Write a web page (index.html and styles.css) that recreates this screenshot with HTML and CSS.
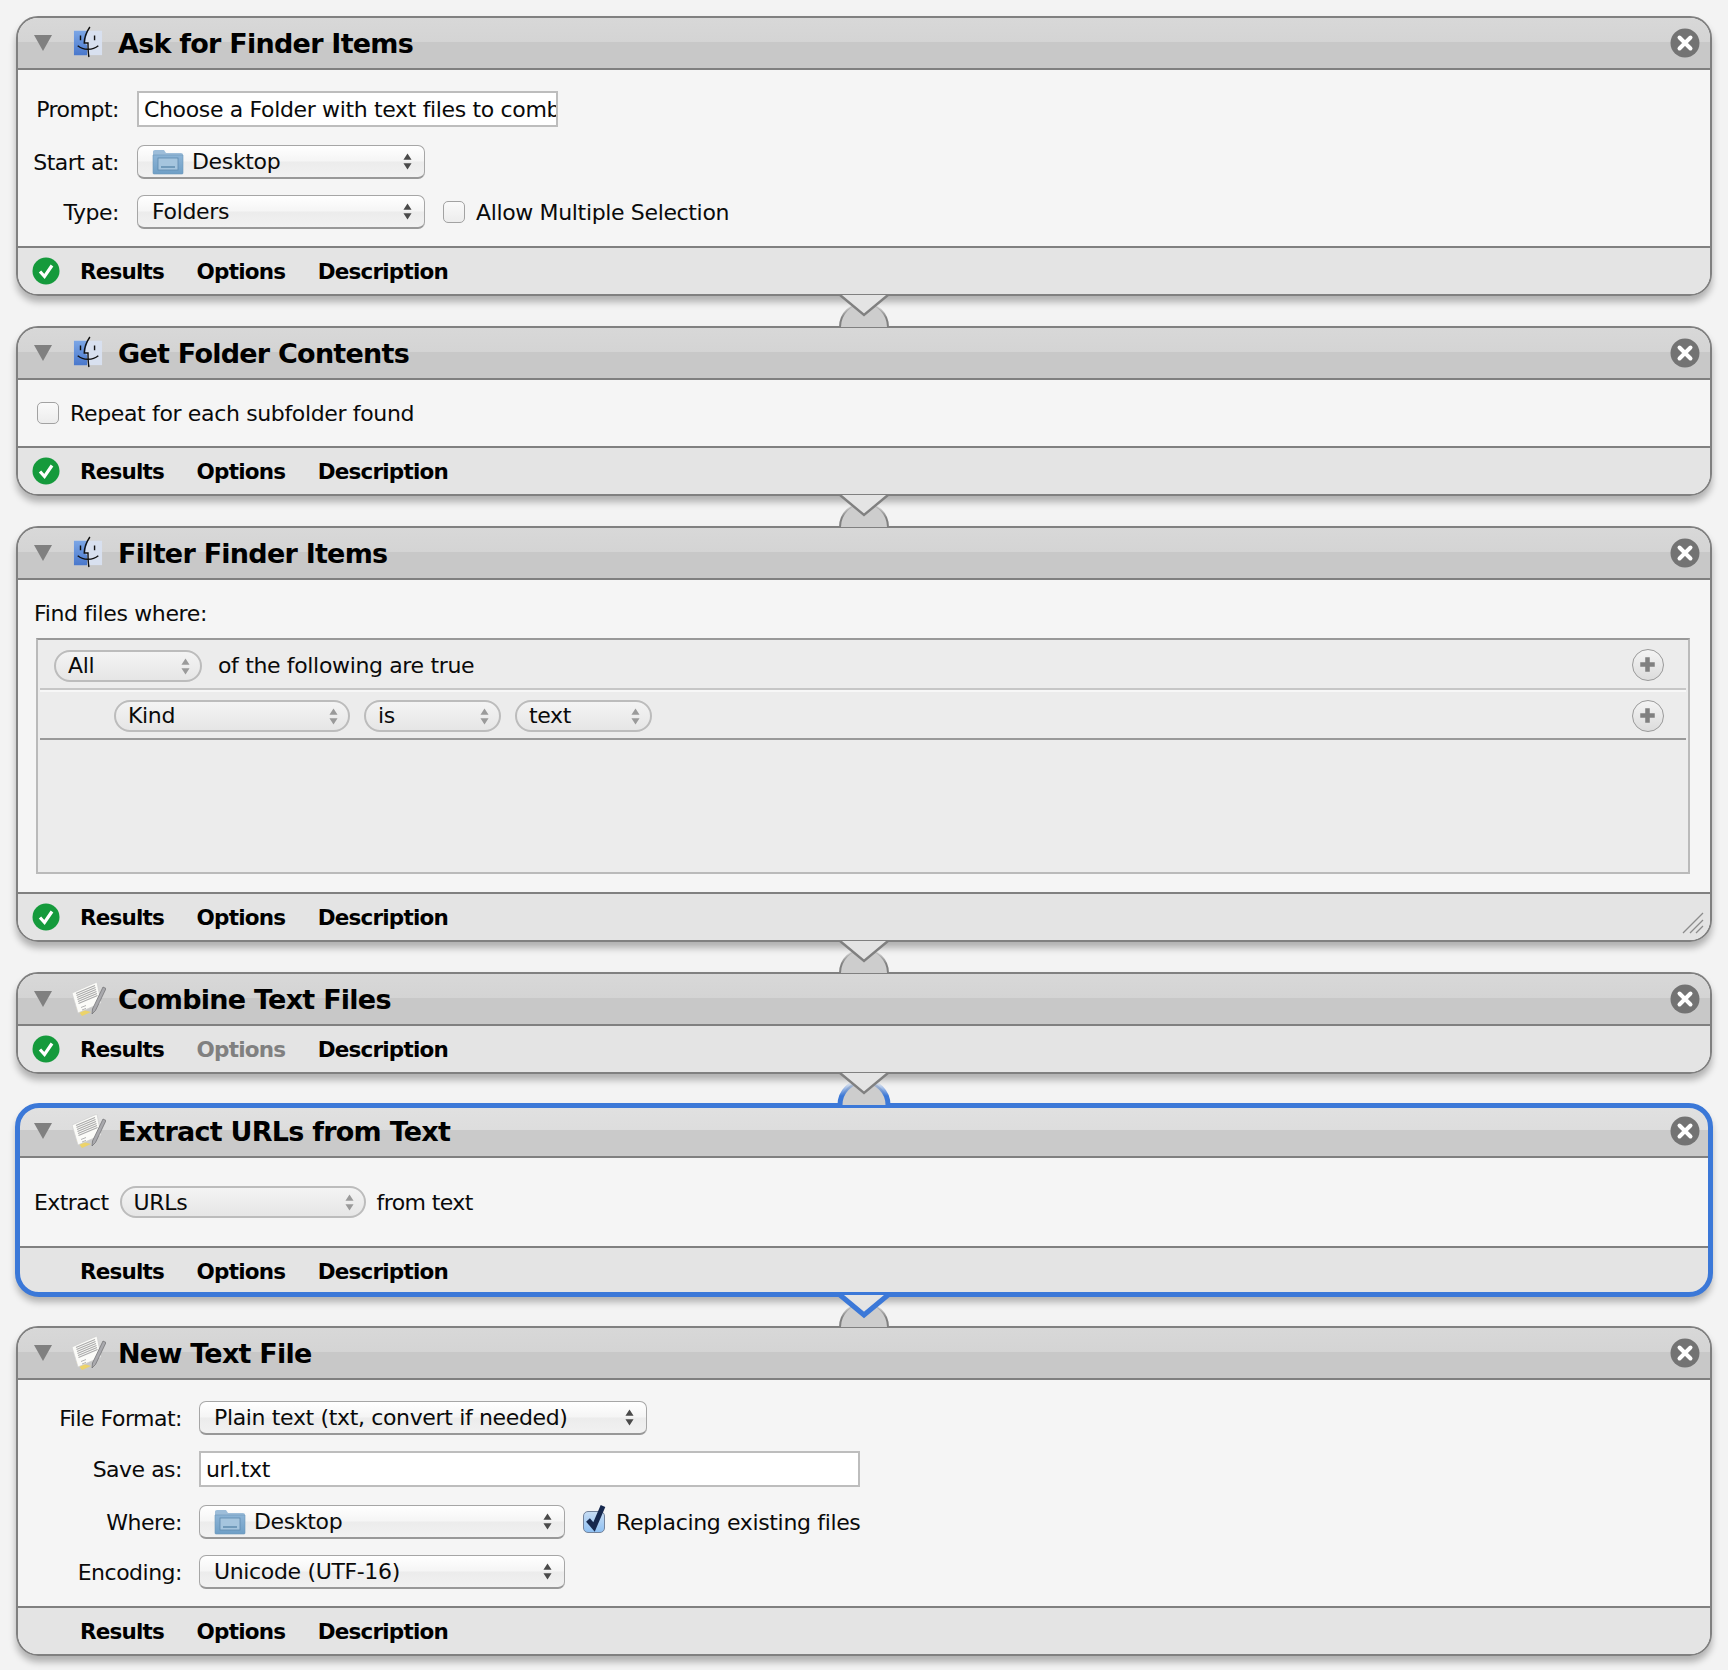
FILE: index.html
```html
<!DOCTYPE html>
<html>
<head>
    <title>Workflow</title>
    <link rel="stylesheet" href="styles.css">
</head>
<body>
    <svg class="defs" width="0" height="0">
        <defs>
            <linearGradient id="arcFade" x1="0" y1="10" x2="0" y2="24" gradientUnits="userSpaceOnUse">
                <stop offset="0" stop-color="#808080" stop-opacity="0"/>
                <stop offset="1" stop-color="#808080"/>
            </linearGradient>
            <linearGradient id="arcFadeBlue" x1="0" y1="10" x2="0" y2="24" gradientUnits="userSpaceOnUse">
                <stop offset="0" stop-color="#3b78d8" stop-opacity="0"/>
                <stop offset="1" stop-color="#3b78d8"/>
            </linearGradient>
            <linearGradient id="finderBlue" x1="0" y1="0" x2="0" y2="1">
                <stop offset="0" stop-color="#7ba6e6"/>
                <stop offset="1" stop-color="#4a78cc"/>
            </linearGradient>
            <linearGradient id="folderBlue" x1="0" y1="0" x2="0" y2="1">
                <stop offset="0" stop-color="#8db4d6"/>
                <stop offset="1" stop-color="#6f9fc6"/>
            </linearGradient>
            <symbol id="finder" viewBox="0 0 32 34">
                <rect x="1" y="5" width="30" height="26" fill="#d8e0ef"/>
                <path d="M1 5h15c-2 6-3 10-3 14l2 1v11H1z" fill="url(#finderBlue)"/>
                <path d="M18 1c-4 6-6 12-6 17h4c0 5 0 10 1 15" fill="none" stroke="#111" stroke-width="1.500"/>
                <path d="M5 21c6 5 16 5 22 0" fill="none" stroke="#111" stroke-width="1.500"/>
                <path d="M8 10v5M23 10v5" stroke="#111" stroke-width="1.500"/>
            </symbol>
            <symbol id="textedit" viewBox="0 0 34 34">
                <path d="M4 26l6 8 9-4z" fill="#ecd36a"/>
                <path d="M0 11L25 0l4 21-23 10z" fill="#fbfbf8" stroke="#cfcfcf" stroke-width=".7"/>
                <path d="M4 11.500L23 3.500M4.500 13.500L23.500 5.500M5 15.500L24 7.500M5.500 17.500L24.500 9.500M6 19.500L25 11.500M6.500 21.500L25.500 13.500" stroke="#aaaaaa" stroke-width="1.200"/>
                <path d="M9 25.500l5-2M10 28l4-1.600" stroke="#b5b5b5"/>
                <path d="M31 5l3 1.500-10.500 22L20 32l.5-5z" fill="#a9a9ad" stroke="#6d6d70" stroke-width=".7"/>
            </symbol>
            <symbol id="folder" viewBox="0 0 32 26">
                <path d="M1 5V2.500Q1 1 3 1h9l2 3h15q2 0 2 2v18q0 1-1 1H2q-1 0-1-1z" fill="#9dbdd9"/>
                <path d="M1 6h30v18q0 1-1 1H2q-1 0-1-1z" fill="url(#folderBlue)" stroke="#6b97bb" stroke-width=".6"/>
                <rect x="6" y="9" width="20" height="12" fill="#a5c5de" stroke="#5f8bae" stroke-width=".8"/>
                <path d="M9 18h14" stroke="#5f8bae" stroke-width="1.500"/>
            </symbol>
            <symbol id="updown" viewBox="0 0 10 18">
                <path d="M5 0l4.500 7H.5zM5 18L.5 11h9z"/>
            </symbol>
            <symbol id="close" viewBox="0 0 30 30">
                <circle cx="15" cy="15" r="14.500" fill="#737373"/>
                <path d="M9.500 9.500l11 11M20.500 9.500l-11 11" stroke="#fff" stroke-width="4" stroke-linecap="round"/>
            </symbol>
            <symbol id="ok" viewBox="0 0 28 28">
                <circle cx="14" cy="14" r="13.500" fill="#159a3c"/>
                <path d="M8 14.500l4.500 5L20 8.500" fill="none" stroke="#fff" stroke-width="3.200"/>
            </symbol>
            <symbol id="plus" viewBox="0 0 32 32">
                <path d="M13.500 8h5v5.500H24v5h-5.500V24h-5v-5.500H8v-5h5.500z" fill="#808080"/>
            </symbol>
        </defs>
    </svg>

    <div class="card">
        <div class="card-head">
            <span class="tri"></span>
            <svg class="app-icon"><use href="#finder"/></svg>
            <h2>Ask for Finder Items</h2>
            <svg class="close"><use href="#close"/></svg>
        </div>
        <div class="card-body ask">
            <div class="row row-input">
                <label class="lbl">Prompt:</label>
                <div class="field prompt"><span>Choose a Folder with text files to comb</span></div>
            </div>
            <div class="row">
                <label class="lbl">Start at:</label>
                <div class="select w-288">
                    <svg class="folder"><use href="#folder"/></svg>
                    <span>Desktop</span>
                    <svg class="arrows"><use href="#updown"/></svg>
                </div>
            </div>
            <div class="row">
                <label class="lbl">Type:</label>
                <div class="select w-288">
                    <span>Folders</span>
                    <svg class="arrows"><use href="#updown"/></svg>
                </div>
                <span class="check"></span>
                <span class="check-text">Allow Multiple Selection</span>
            </div>
        </div>
        <div class="card-foot">
            <svg class="ok"><use href="#ok"/></svg>
            <div class="tabs"><b>Results</b><b>Options</b><b>Description</b></div>
        </div>
        <svg class="link" viewBox="0 0 60 40"><path class="arc-fill" d="M6 33A24 24 0 0 1 54 33z"/><path class="arc" d="M6 33A24 24 0 0 1 54 33"/><path class="notch" d="M6 1L30 21 54 1"/></svg>
    </div>

    <div class="card">
        <div class="card-head">
            <span class="tri"></span>
            <svg class="app-icon"><use href="#finder"/></svg>
            <h2>Get Folder Contents</h2>
            <svg class="close"><use href="#close"/></svg>
        </div>
        <div class="card-body contents">
            <span class="check"></span>
            <span class="check-text">Repeat for each subfolder found</span>
        </div>
        <div class="card-foot">
            <svg class="ok"><use href="#ok"/></svg>
            <div class="tabs"><b>Results</b><b>Options</b><b>Description</b></div>
        </div>
        <svg class="link" viewBox="0 0 60 40"><path class="arc-fill" d="M6 33A24 24 0 0 1 54 33z"/><path class="arc" d="M6 33A24 24 0 0 1 54 33"/><path class="notch" d="M6 1L30 21 54 1"/></svg>
    </div>

    <div class="card">
        <div class="card-head">
            <span class="tri"></span>
            <svg class="app-icon"><use href="#finder"/></svg>
            <h2>Filter Finder Items</h2>
            <svg class="close"><use href="#close"/></svg>
        </div>
        <div class="card-body filter">
            <p class="find">Find files where:</p>
            <div class="rules">
                <div class="rule rule-top">
                    <div class="pill w-148"><span>All</span><svg class="arrows"><use href="#updown"/></svg></div>
                    <span class="rule-text">of the following are true</span>
                    <span class="add"><svg><use href="#plus"/></svg></span>
                </div>
                <div class="rule rule-sub">
                    <div class="pill w-236"><span>Kind</span><svg class="arrows"><use href="#updown"/></svg></div>
                    <div class="pill w-137"><span>is</span><svg class="arrows"><use href="#updown"/></svg></div>
                    <div class="pill w-137"><span>text</span><svg class="arrows"><use href="#updown"/></svg></div>
                    <span class="add"><svg><use href="#plus"/></svg></span>
                </div>
            </div>
        </div>
        <div class="card-foot">
            <svg class="ok"><use href="#ok"/></svg>
            <div class="tabs"><b>Results</b><b>Options</b><b>Description</b></div>
            <svg class="grip" viewBox="0 0 22 22"><path d="M1 21L21 1M8 21L21 8M14 21l7-7" stroke="#8c8c8c" stroke-width="1.300" fill="none"/></svg>
        </div>
        <svg class="link" viewBox="0 0 60 40"><path class="arc-fill" d="M6 33A24 24 0 0 1 54 33z"/><path class="arc" d="M6 33A24 24 0 0 1 54 33"/><path class="notch" d="M6 1L30 21 54 1"/></svg>
    </div>

    <div class="card">
        <div class="card-head">
            <span class="tri"></span>
            <svg class="app-icon text-icon"><use href="#textedit"/></svg>
            <h2>Combine Text Files</h2>
            <svg class="close"><use href="#close"/></svg>
        </div>
        <div class="card-foot no-line">
            <svg class="ok"><use href="#ok"/></svg>
            <div class="tabs"><b>Results</b><b class="off">Options</b><b>Description</b></div>
        </div>
        <svg class="link blue-arc" viewBox="0 0 60 40"><path class="arc-fill" d="M6 33A24 24 0 0 1 54 33z"/><path class="arc" d="M6 33A24 24 0 0 1 54 33"/><path class="notch" d="M6 1L30 21 54 1"/></svg>
    </div>

    <div class="card selected">
        <div class="card-head">
            <span class="tri"></span>
            <svg class="app-icon text-icon"><use href="#textedit"/></svg>
            <h2>Extract URLs from Text</h2>
            <svg class="close"><use href="#close"/></svg>
        </div>
        <div class="card-body extract">
            <span class="plain">Extract</span>
            <div class="pill w-246"><span>URLs</span><svg class="arrows"><use href="#updown"/></svg></div>
            <span class="plain">from text</span>
        </div>
        <div class="card-foot">
            <div class="tabs no-ok"><b>Results</b><b>Options</b><b>Description</b></div>
        </div>
        <svg class="link blue-notch" viewBox="0 0 60 40"><path class="arc-fill" d="M6 33A24 24 0 0 1 54 33z"/><path class="arc" d="M6 33A24 24 0 0 1 54 33"/><path class="notch" d="M6 1L30 21 54 1"/></svg>
    </div>

    <div class="card">
        <div class="card-head">
            <span class="tri"></span>
            <svg class="app-icon text-icon"><use href="#textedit"/></svg>
            <h2>New Text File</h2>
            <svg class="close"><use href="#close"/></svg>
        </div>
        <div class="card-body newfile">
            <div class="row">
                <label class="lbl">File Format:</label>
                <div class="select w-448">
                    <span>Plain text (txt, convert if needed)</span>
                    <svg class="arrows"><use href="#updown"/></svg>
                </div>
            </div>
            <div class="row row-input">
                <label class="lbl">Save as:</label>
                <div class="field saveas"><span>url.txt</span></div>
            </div>
            <div class="row">
                <label class="lbl">Where:</label>
                <div class="select w-366">
                    <svg class="folder"><use href="#folder"/></svg>
                    <span>Desktop</span>
                    <svg class="arrows"><use href="#updown"/></svg>
                </div>
                <span class="check checked">
                    <svg viewBox="0 0 24 30"><path d="M5 17l6 7L20 3" fill="none" stroke="#16284e" stroke-width="5"/></svg>
                </span>
                <span class="check-text">Replacing existing files</span>
            </div>
            <div class="row">
                <label class="lbl">Encoding:</label>
                <div class="select w-366">
                    <span>Unicode (UTF-16)</span>
                    <svg class="arrows"><use href="#updown"/></svg>
                </div>
            </div>
        </div>
        <div class="card-foot">
            <div class="tabs no-ok"><b>Results</b><b>Options</b><b>Description</b></div>
        </div>
    </div>
</body>
</html>
```

FILE: styles.css
```css
html, body {
    margin: 0;
}
body {
    background: #f3f3f3;
    padding: 16px 16px 14px;
    font-family: "DejaVu Sans", sans-serif;
    font-size: 22px;
    letter-spacing: -0.35px;
    color: #0a0a0a;
}
.defs {
    position: absolute;
}

/* action cards */
.card {
    position: relative;
    width: 1696px;
    box-sizing: border-box;
    border: 2px solid #808080;
    border-radius: 22px;
    margin-bottom: 30px;
    box-shadow: 0 6px 7px rgba(0, 0, 0, 0.28);
}
.card:last-child {
    margin-bottom: 0;
}
.card-head {
    display: flex;
    align-items: center;
    height: 50px;
    border-bottom: 2px solid #808080;
    border-radius: 20px 20px 0 0;
    background: linear-gradient(#d8d8d8, #d4d4d4 48%, #c8c8c8 48%, #c8c8c8);
    padding: 0 0 0 16px;
}
.selected .card-head {
    background: linear-gradient(#e1e1e1, #dddddd 48%, #cacaca 48%, #cacaca);
}
.selected::after {
    content: "";
    position: absolute;
    inset: -3px;
    border: 5px solid #3b78d8;
    border-radius: 24px;
    z-index: 1;
    pointer-events: none;
}
.tri {
    width: 0;
    height: 0;
    border-left: 9px solid transparent;
    border-right: 9px solid transparent;
    border-top: 16px solid #808080;
    margin-right: 21px;
}
.app-icon {
    width: 30px;
    height: 32px;
    margin: -3px 15px 0 0;
}
.text-icon {
    width: 34px;
    height: 34px;
    margin: 0 12px 0 -1px;
}
h2 {
    margin: 0;
    padding-top: 1px;
    font-size: 27px;
    letter-spacing: -0.75px;
    font-weight: bold;
    color: #000;
}
.close {
    width: 30px;
    height: 30px;
    margin-left: auto;
    margin-right: 10px;
}

.card-body {
    background: #f5f5f5;
    box-sizing: border-box;
}
.ask {
    height: 176px;
    padding-top: 21px;
}
.contents {
    height: 66px;
    display: flex;
    align-items: center;
    padding-left: 19px;
}
.filter {
    height: 312px;
    padding: 20px 20px 0 18px;
}
.extract {
    height: 88px;
    display: flex;
    align-items: center;
    padding-left: 16px;
    gap: 11px;
}
.plain {
    letter-spacing: -0.6px;
}
.newfile {
    height: 226px;
    padding-top: 21px;
}

.row {
    display: flex;
    align-items: center;
    height: 34px;
    margin-bottom: 16px;
}
.row-input {
    height: 36px;
    margin-bottom: 18px;
}
.lbl {
    width: 101px;
    margin-right: 18px;
    padding-top: 1px;
    text-align: right;
    white-space: nowrap;
    letter-spacing: -0.5px;
}
.newfile .lbl {
    width: 164px;
    margin-right: 17px;
}
.field {
    box-sizing: border-box;
    height: 36px;
    background: #fff;
    border: 2px solid #bdbdbd;
    padding: 1px 5px 0;
    line-height: 32px;
    overflow: hidden;
    white-space: nowrap;
}
.prompt {
    width: 421px;
}
.saveas {
    width: 661px;
}

/* popup menus */
.select, .pill {
    box-sizing: border-box;
    display: flex;
    align-items: center;
    position: relative;
    background: linear-gradient(#fff, #f5f5f5 48%, #ececec 52%, #f1f1f1);
    white-space: nowrap;
}
.select {
    height: 34px;
    border: 1px solid #a6a6a6;
    border-bottom: 2px solid #989898;
    border-radius: 7px;
    padding-left: 14px;
}
.pill {
    height: 32px;
    border: 2px solid #bcbcbc;
    border-radius: 16px;
    padding-left: 12px;
    background: linear-gradient(#f4f4f4, #e6e6e6);
}
.w-288 { width: 288px; }
.w-448 { width: 448px; }
.w-366 { width: 366px; }
.w-148 { width: 148px; }
.w-236 { width: 236px; }
.w-137 { width: 137px; }
.w-246 { width: 246px; }
.folder {
    width: 32px;
    height: 26px;
    margin-right: 8px;
}
.arrows {
    position: absolute;
    right: 12px;
    top: 50%;
    width: 9px;
    height: 17px;
    margin-top: -9px;
    fill: #4a4a4a;
}
.pill .arrows {
    fill: #9a9a9a;
    right: 10px;
    margin-top: -8px;
}

/* checkboxes */
.check {
    box-sizing: border-box;
    display: inline-block;
    position: relative;
    width: 22px;
    height: 22px;
    background: linear-gradient(#fafafa, #ececec);
    border: 1.5px solid #a2a2a2;
    border-radius: 5px;
    margin-right: 11px;
}
.row .check {
    margin-left: 18px;
}
.checked {
    background: linear-gradient(#c6dcf3, #8fc0f2);
    border-color: #73839b;
}
.checked svg {
    position: absolute;
    left: -1px;
    top: -9px;
    width: 24px;
    height: 30px;
}

/* filter rules */
.find {
    margin: 0 0 10px -2px;
    line-height: 28px;
}
.rules {
    box-sizing: border-box;
    height: 236px;
    background: #ececec;
    border: 2px solid #bababa;
    border-top-color: #999;
    padding: 0 2px;
}
.rule {
    display: flex;
    align-items: center;
    position: relative;
    box-sizing: border-box;
}
.rule-top {
    height: 50px;
    padding: 3px 0 0 14px;
    border-bottom: 2px solid #c6c6c6;
}
.rule-sub {
    height: 50px;
    padding: 1px 0 0 74px;
    gap: 14px;
    border-top: 2px solid #f7f7f7;
    border-bottom: 2px solid #999;
}
.rule-text {
    margin-left: 16px;
}
.add {
    position: absolute;
    right: 22px;
    top: 50%;
    box-sizing: border-box;
    width: 32px;
    height: 32px;
    margin-top: -15px;
    border: 1.5px solid #9a9a9a;
    border-radius: 50%;
    background: linear-gradient(#f4f4f4, #dcdcdc);
}
.add svg {
    display: block;
    width: 29px;
    height: 29px;
}

/* footer tabs */
.card-foot {
    position: relative;
    display: flex;
    align-items: center;
    height: 46px;
    border-top: 2px solid #808080;
    border-radius: 0 0 20px 20px;
    background: #e4e4e4;
    padding-left: 14px;
}
.card-foot.no-line {
    border-top: 0;
    height: 46px;
}
.ok {
    width: 28px;
    height: 28px;
}
.tabs {
    display: flex;
    gap: 32.500px;
    margin-left: 20px;
    font-size: 21.500px;
    color: #000;
    letter-spacing: -0.8px;
}
.tabs.no-ok {
    margin-left: 48px;
}
.off {
    color: #808080;
}
.grip {
    position: absolute;
    right: 6px;
    bottom: 6px;
    width: 22px;
    height: 22px;
}

/* connector between two cards */
.link {
    position: absolute;
    top: 100%;
    left: calc(50% - 30px);
    width: 60px;
    height: 40px;
    overflow: visible;
    z-index: 2;
}
.arc-fill {
    fill: #cdcdcd;
}
.arc {
    fill: none;
    stroke: url(#arcFade);
    stroke-width: 2;
}
.notch {
    fill: #e4e4e4;
    stroke: #808080;
    stroke-width: 2.400;
}
.blue-arc .arc {
    stroke: url(#arcFadeBlue);
    stroke-width: 5;
}
.blue-notch .notch {
    stroke: #3b78d8;
    stroke-width: 5;
}
```
